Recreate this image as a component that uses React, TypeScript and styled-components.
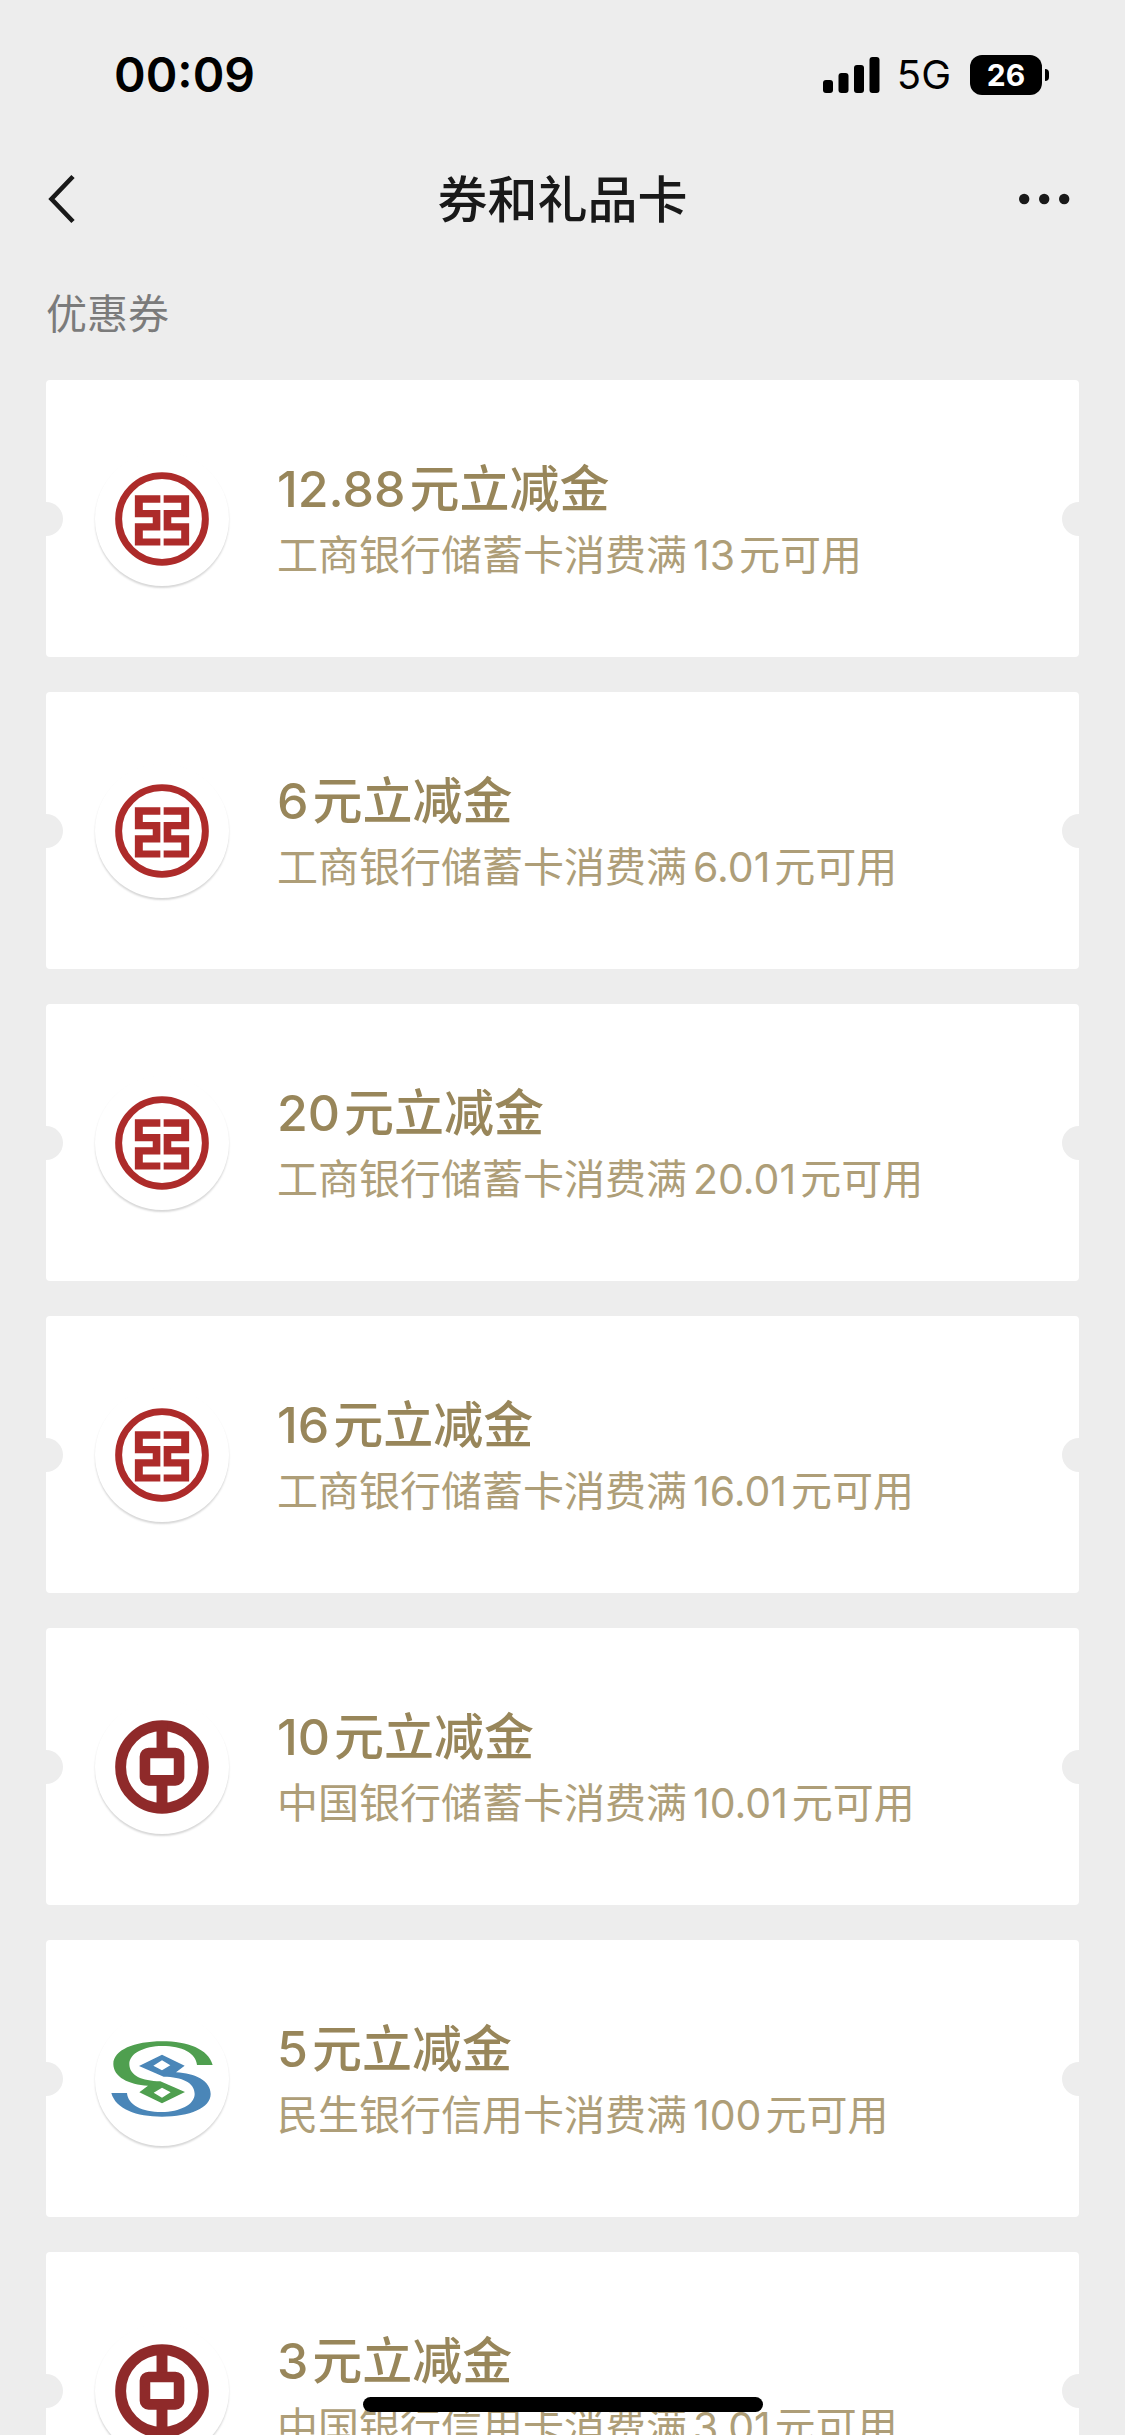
import React from "react";
import styled, { createGlobalStyle } from "styled-components";

const GlobalStyle = createGlobalStyle`
  * { box-sizing: border-box; }
  body {
    margin: 0;
    background: #ededed;
    font-family: Inter, "Noto Sans CJK SC", sans-serif;
  }
`;

const Screen = styled.div`
  display: flex;
  flex-direction: column;
  height: 100vh;
  overflow: hidden;
  background: #ededed;
`;

const StatusBar = styled.header`
  flex: none;
  display: flex;
  align-items: center;
  justify-content: space-between;
  height: 150px;
  padding: 0 76px 0 114px;
  color: #000;
`;

const Clock = styled.time`
  font-size: 48px;
  line-height: 60px;
  font-weight: 600;
`;

const StatusIcons = styled.div`
  display: flex;
  align-items: center;
`;

const Network = styled.span`
  margin: 0 19px 0 17px;
  font-size: 40px;
  line-height: 48px;
`;

const Battery = styled.span`
  display: flex;
  align-items: center;
  justify-content: center;
  width: 72px;
  height: 40px;
  border-radius: 12px;
  background: #000;
  color: #fff;
  font-size: 30px;
  line-height: 40px;
  font-weight: 700;
`;

const BatteryTip = styled.span`
  width: 4px;
  height: 12px;
  margin-left: 3px;
  border-radius: 0 4px 4px 0;
  background: #000;
`;

const NavBar = styled.nav`
  flex: none;
  display: grid;
  grid-template-columns: 1fr auto 1fr;
  align-items: center;
  height: 98px;
  padding: 0 46px;
  color: #191919;
`;

const IconButton = styled.button<{ $end?: boolean }>`
  justify-self: ${(p) => (p.$end ? "end" : "start")};
  display: flex;
  padding: 0;
  border: 0;
  background: none;
  color: inherit;
`;

const PageTitle = styled.h1`
  margin: 0;
  padding-top: 2px;
  font-size: 50px;
  line-height: 70px;
  font-weight: 500;
`;

const Content = styled.main`
  flex: 1;
  min-height: 0;
  padding: 0 46px;
  overflow-y: auto;
  scrollbar-width: none;
`;

const SectionTitle = styled.h2`
  margin: 0;
  padding: 36px 0;
  color: #7b7b7b;
  font-size: 41px;
  line-height: 60px;
  font-weight: 400;
`;

const CouponList = styled.ul`
  display: flex;
  flex-direction: column;
  gap: 35px;
  margin: 0;
  padding: 0 0 80px;
  list-style: none;
`;

const Coupon = styled.li`
  position: relative;
  display: flex;
  align-items: center;
  gap: 48px;
  height: 277px;
  padding: 0 49px;
  border-radius: 4px;
  background: #fff;
  overflow: hidden;
`;

const Notch = styled.span<{ $side: "left" | "right" }>`
  position: absolute;
  top: 50%;
  ${(p) => p.$side}: -17px;
  width: 34px;
  height: 34px;
  margin-top: -17px;
  border-radius: 50%;
  background: #ededed;
`;

const LogoDisc = styled.div`
  flex: none;
  display: flex;
  align-items: center;
  justify-content: center;
  width: 134px;
  height: 134px;
  border-radius: 50%;
  background: #fff;
  box-shadow: 0 2px 2px rgba(0, 0, 0, 0.16);
`;

const CouponText = styled.div`
  display: flex;
  flex-direction: column;
  white-space: nowrap;
`;

const CouponTitle = styled.h3`
  margin: 0;
  color: #98865a;
  font-size: 50px;
  line-height: 72px;
  font-weight: 500;
`;

const CouponNote = styled.p`
  margin: 0;
  color: #ae9e78;
  font-size: 41px;
  line-height: 60px;
`;

const Amount = styled.span<{ $inline?: boolean }>`
  margin-right: 4px;
  margin-left: ${(p) => (p.$inline ? "6px" : "0")};
`;

const HomeIndicator = styled.div`
  position: fixed;
  bottom: 23px;
  left: 50%;
  width: 400px;
  height: 15px;
  margin-left: -200px;
  border-radius: 8px;
  background: #000;
`;

const SignalIcon = () => (
  <svg width="57" height="36" viewBox="0 0 57 36" aria-hidden="true">
    <rect x="0" y="23" width="10" height="13" rx="3" />
    <rect x="15.5" y="16" width="10" height="20" rx="3" />
    <rect x="31" y="8" width="10" height="28" rx="3" />
    <rect x="46.5" y="0" width="10" height="36" rx="3" />
  </svg>
);

const BackIcon = () => (
  <svg width="32" height="52" viewBox="0 0 32 52" fill="none" aria-hidden="true">
    <path d="M27 3.5L5.5 26L27 48.5" stroke="currentColor" strokeWidth="4.6" />
  </svg>
);

const MoreIcon = () => (
  <svg width="60" height="12" viewBox="0 0 60 12" fill="currentColor" aria-hidden="true">
    <circle cx="5.2" cy="6" r="5.2" />
    <circle cx="25.2" cy="6" r="5.2" />
    <circle cx="45.2" cy="6" r="5.2" />
  </svg>
);

const IcbcLogo = () => (
  <svg width="94" height="94" viewBox="103 66 284 282" role="img" aria-label="工商银行">
    <circle cx="245" cy="207" r="131" fill="none" stroke="#ad2b2a" strokeWidth="21" />
    <path
      fill="#ad2b2a"
      d="M163 135H240V158H187V180H240V242H187V266H240V287H163V220H217V202H163Z
         M327 135H250V158H303V180H250V242H303V266H250V287H327V220H273V202H327Z"
    />
  </svg>
);

const BocLogo = () => (
  <svg width="94" height="94" viewBox="103 56 284 282" fill="none" stroke="#8f2a2a" role="img" aria-label="中国银行">
    <circle cx="245" cy="197" r="125" strokeWidth="33" />
    <rect x="193.500" y="154.500" width="103" height="83" rx="11" strokeWidth="32" />
    <path d="M245 60V142M245 250V334" strokeWidth="33" />
  </svg>
);

const cmbcStroke =
  "M397 160C384 112 322 89 245 89C162 89 99 115 99 157C99 196 145 219 203 222L177 242L245 275L314 241L240 209C185 208 147 192 147 157C147 125 192 103 246 103C305 103 347 124 350 160ZM220 243L245 228L271 242L245 258Z";

const CmbcLogo = () => (
  <svg width="102" height="76" viewBox="92 88 306 228" fillRule="evenodd" role="img" aria-label="民生银行">
    <path d={cmbcStroke} fill="#4f9f4f" />
    <path d={cmbcStroke} fill="#4a86b8" transform="rotate(180 245 202)" />
  </svg>
);

const banks = {
  icbc: { name: "工商银行", Logo: IcbcLogo },
  boc: { name: "中国银行", Logo: BocLogo },
  cmbc: { name: "民生银行", Logo: CmbcLogo },
};

type CouponData = {
  bank: keyof typeof banks;
  card: "储蓄卡" | "信用卡";
  amount: string;
  threshold: string;
};

const coupons: CouponData[] = [
  { bank: "icbc", card: "储蓄卡", amount: "12.88", threshold: "13" },
  { bank: "icbc", card: "储蓄卡", amount: "6", threshold: "6.01" },
  { bank: "icbc", card: "储蓄卡", amount: "20", threshold: "20.01" },
  { bank: "icbc", card: "储蓄卡", amount: "16", threshold: "16.01" },
  { bank: "boc", card: "储蓄卡", amount: "10", threshold: "10.01" },
  { bank: "cmbc", card: "信用卡", amount: "5", threshold: "100" },
  { bank: "boc", card: "信用卡", amount: "3", threshold: "3.01" },
];

const CouponCard = ({ bank, card, amount, threshold }: CouponData) => {
  const { name, Logo } = banks[bank];
  return (
    <Coupon>
      <Notch $side="left" />
      <LogoDisc>
        <Logo />
      </LogoDisc>
      <CouponText>
        <CouponTitle>
          <Amount>{amount}</Amount>元立减金
        </CouponTitle>
        <CouponNote>
          {name}
          {card}消费满<Amount $inline>{threshold}</Amount>元可用
        </CouponNote>
      </CouponText>
      <Notch $side="right" />
    </Coupon>
  );
};

export default function App() {
  return (
    <Screen>
      <GlobalStyle />
      <StatusBar>
        <Clock>00:09</Clock>
        <StatusIcons>
          <SignalIcon />
          <Network>5G</Network>
          <Battery>26</Battery>
          <BatteryTip />
        </StatusIcons>
      </StatusBar>
      <NavBar>
        <IconButton type="button" aria-label="返回">
          <BackIcon />
        </IconButton>
        <PageTitle>券和礼品卡</PageTitle>
        <IconButton type="button" aria-label="更多" $end>
          <MoreIcon />
        </IconButton>
      </NavBar>
      <Content>
        <SectionTitle>优惠券</SectionTitle>
        <CouponList>
          {coupons.map((coupon, index) => (
            <CouponCard key={index} {...coupon} />
          ))}
        </CouponList>
      </Content>
      <HomeIndicator />
    </Screen>
  );
}
